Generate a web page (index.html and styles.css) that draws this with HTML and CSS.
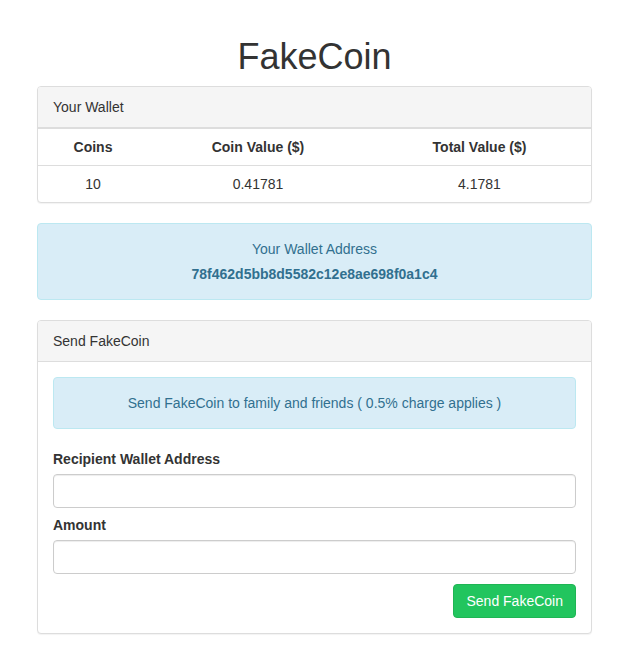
FILE: index.html
```html
<!DOCTYPE html>
<html>
<head>
<meta charset="utf-8">
<title>FakeCoin</title>
<link rel="stylesheet" href="styles.css">
</head>
<body>
<div class="container">
  <h1 class="title">FakeCoin</h1>

  <div class="panel">
    <div class="panel-heading">Your Wallet</div>
    <table class="table">
      <thead>
        <tr>
          <th class="col-coins">Coins</th>
          <th class="col-value">Coin Value ($)</th>
          <th class="col-total">Total Value ($)</th>
        </tr>
      </thead>
      <tbody>
        <tr>
          <td>10</td>
          <td>0.41781</td>
          <td>4.1781</td>
        </tr>
      </tbody>
    </table>
  </div>

  <div class="alert alert-address">
    <div class="alert-line">Your Wallet Address</div>
    <div class="alert-line address">78f462d5bb8d5582c12e8ae698f0a1c4</div>
  </div>

  <div class="panel">
    <div class="panel-heading">Send FakeCoin</div>
    <div class="panel-body">
      <div class="alert alert-note">Send FakeCoin to family and friends ( 0.5% charge applies )</div>
      <form class="send-form">
        <div class="form-group">
          <label class="form-label" for="recipient">Recipient Wallet Address</label>
          <input class="form-control" id="recipient" type="text">
        </div>
        <div class="form-group">
          <label class="form-label" for="amount">Amount</label>
          <input class="form-control" id="amount" type="text">
        </div>
        <div class="form-actions">
          <button class="btn-send" type="button">Send FakeCoin</button>
        </div>
      </form>
    </div>
  </div>
</div>
</body>
</html>
```
FILE: styles.css
```css
* { box-sizing: border-box; }

html, body {
  margin: 0;
  padding: 0;
  background: #fff;
}

body {
  font-family: "Liberation Sans", Arial, Helvetica, sans-serif;
  font-size: 14px;
  line-height: 20px;
  color: #333;
}

.container {
  width: 555px;
  margin-left: 37px;
  padding-top: 37px;
  padding-bottom: 28px;
}

.title {
  margin: 0 0 9px;
  font-size: 36px;
  font-weight: 500;
  line-height: 39.6px;
  text-align: center;
  color: #333;
}

.panel {
  border: 1px solid #ddd;
  border-radius: 4px;
  background: #fff;
  margin-bottom: 20px;
  box-shadow: 0 1px 1px rgba(0,0,0,0.05);
  overflow: hidden;
}

.panel-heading {
  height: 41px;
  padding: 10px 15px;
  background: #f5f5f5;
  border-bottom: 1px solid #ddd;
  color: #333;
}

.table {
  width: 100%;
  border-collapse: collapse;
  border-top: 1px solid #ddd;
}

.table th,
.table td {
  height: 37px;
  padding: 8px;
  text-align: center;
  vertical-align: middle;
}

.table th {
  font-weight: bold;
  border-bottom: 1px solid #ddd;
}

.col-coins { width: 110px; }
.col-value { width: 220px; }

.alert {
  border: 1px solid #bce8f1;
  border-radius: 4px;
  background: #d9edf7;
  color: #31708f;
  text-align: center;
  padding: 15px;
}

.alert-address {
  margin-bottom: 20px;
  display: flex;
  flex-direction: column;
  gap: 5px;
}

.address {
  font-weight: bold;
}

.panel-body {
  padding: 15px;
}

.alert-note {
  margin-bottom: 20px;
}

.form-group {
  display: flex;
  flex-direction: column;
  align-items: flex-start;
}

.form-group + .form-group {
  margin-top: 7px;
}

.form-label {
  font-weight: bold;
  margin-bottom: 5px;
}

.form-control {
  width: 100%;
  height: 34px;
  padding: 6px 12px;
  font: inherit;
  color: #555;
  background: #fff;
  border: 1px solid #ccc;
  border-radius: 4px;
  box-shadow: inset 0 1px 1px rgba(0,0,0,0.075);
}

.form-actions {
  display: flex;
  justify-content: flex-end;
  margin-top: 10px;
}

.btn-send {
  height: 34px;
  padding: 6px 12px;
  font: inherit;
  color: #fff;
  background: #22c55e;
  border: 1px solid #1fb554;
  border-radius: 4px;
  cursor: pointer;
}
```
